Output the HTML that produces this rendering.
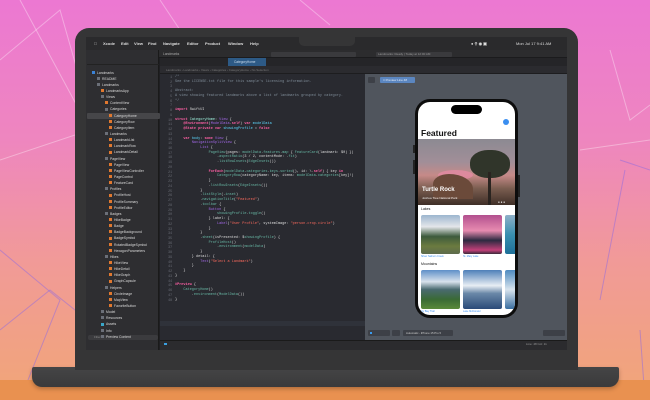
<!DOCTYPE html>
<html><head><meta charset="utf-8"><style>
*{margin:0;padding:0;box-sizing:border-box}
body{width:650px;height:400px;overflow:hidden;position:relative;font-family:"Liberation Sans",sans-serif;background:linear-gradient(180deg,#ec78d2 0%,#ee86bf 35%,#f19a98 65%,#f1a47c 95%)}
.abs{position:absolute}
.floor{left:0;top:380px;width:650px;height:20px;background:#e99150}
.bezel{left:75px;top:28px;width:503px;height:342px;background:#353536;border-radius:14px 14px 0 0}
.base{left:32px;top:367px;width:587px;height:20px;background:linear-gradient(#454546,#3a3a3b);border-radius:2px 2px 10px 10px;box-shadow:0 2px 4px rgba(0,0,0,.25)}
.screen{left:86px;top:37px;width:481px;height:313px;background:#1f1f22;overflow:hidden}
.notch{left:299px;top:36px;width:56px;height:10px;background:#353536;border-radius:0 0 5px 5px}
.menubar{left:0;top:0;width:481px;height:13px;background:#2a2a2c;color:#ddd;font-size:4px;font-weight:bold}
.menubar span{position:absolute;top:4px}
.tb{left:0;top:13px;width:481px;height:8px;background:#2c2c2e;border-bottom:1px solid #1b1b1d}
.side{left:0;top:13px;width:73px;height:300px;background:#2e2e31;border-right:1px solid #1a1a1a}
.row{position:absolute;font-size:3.4px;color:#d8d8d8;white-space:nowrap;height:5px;line-height:5px}
.ic{display:inline-block;width:3px;height:3px;margin-right:2px;vertical-align:-0.3px;background:#e0782f}
.fo{background:#6b6f78}
.editor{left:74px;top:21px;width:205px;height:292px;background:#292a30}
.tabs{left:74px;top:21px;width:407px;height:8px;background:#252528}
.crumb{left:74px;top:29px;width:407px;height:8px;background:#2b2b2f;border-bottom:1px solid #1d1d1f}
.code{position:absolute;left:74px;top:38px;font-family:"Liberation Mono",monospace;font-size:3.5px;line-height:4.74px;color:#dcdcdc;white-space:pre}
.ln{position:absolute;left:74px;top:38px;width:12px;text-align:right;font-family:"Liberation Mono",monospace;font-size:3.2px;line-height:4.74px;color:#6c6f78;white-space:pre}
.c{color:#7f8c98}.k{color:#fc5fa3;font-weight:bold}.t{color:#5dd8ff}.f{color:#67b7a4}.s{color:#fc6a5d}.p{color:#a167e6}.m{color:#9ef1dd}
.prev{left:279px;top:37px;width:202px;height:276px;background:#50555d}
.status{left:74px;top:303px;width:407px;height:10px;background:#2b2b2e;border-top:1px solid #1a1a1a}
.phone{left:415px;top:99px;width:103px;height:219px;background:#0d0d0d;border-radius:15px}
.ps{left:418px;top:102px;width:97px;height:213px;background:#fff;border-radius:12px;overflow:hidden}
</style></head><body>
<svg class="abs" style="left:0;top:0" width="650" height="400">
<g stroke="rgba(255,255,255,.35)" stroke-width="1" fill="none">
<polyline points="0,60 60,10 80,80"/><polyline points="20,0 90,130 0,160"/><polyline points="160,0 180,30"/><polyline points="300,0 330,25"/>
<polyline points="610,50 630,120 650,105"/><polyline points="580,150 650,140"/>
</g>
<g stroke="rgba(150,110,220,.55)" stroke-width="1" fill="none">
<polyline points="620,160 650,170"/><polyline points="600,300 625,170"/><polyline points="0,250 60,300 20,400"/><polyline points="0,330 50,290 100,330"/><polyline points="640,330 645,400"/>
</g>
</svg>
<div class="abs floor"></div>
<div class="abs base"></div>
<div class="abs bezel"></div>
<div class="abs screen">
 <div class="abs menubar">
  <span style="left:8px">&#63743;</span><span style="left:17px">Xcode</span><span style="left:35px">Edit</span><span style="left:48px">View</span><span style="left:62px">Find</span><span style="left:77px">Navigate</span><span style="left:101px">Editor</span><span style="left:119px">Product</span><span style="left:142px">Window</span><span style="left:164px">Help</span>
  <span style="left:385px">&#9679; &#9906; &#9673; &#9635;</span><span style="left:430px;font-weight:normal">Mon Jul 17 9:41 AM</span>
 </div>
 <div class="abs tb"></div>
 <div class="abs" style="left:6px;top:16px;width:12px;height:2px;border-top:2px dotted #777"></div>
 <div class="abs" style="left:77px;top:15px;font-size:3.3px;color:#aaa">Landmarks</div>
 <div class="abs" style="left:185px;top:15px;width:85px;height:5px;background:#3a3a3d;border-radius:1px"></div>
 <div class="abs" style="left:290px;top:15px;width:76px;height:5px;background:#3a3a3d;border-radius:1px;font-size:3px;color:#999;line-height:5px;padding-left:2px">Landmarks: Ready | Today at 12:00 AM</div>
 <div class="abs side"></div>
 <div class="abs" style="left:1px;top:27px;width:72px;height:1px;background:#222"></div>
 <div class="abs" style="left:2px;top:298px;width:70px;height:5px;background:#3b3b3e;border-radius:2px;font-size:3px;color:#888;padding-left:6px;line-height:5px">Filter</div>
 <div class="abs tabs"></div>
 <div class="abs" style="left:142px;top:21px;width:38px;height:8px;background:#2d5a86;font-size:3.2px;color:#cde;line-height:8px;padding-left:6px">CategoryHome</div>
 <div class="abs crumb"></div>
 <div class="abs" style="left:80px;top:31px;font-size:3px;color:#777">Landmarks › Landmarks › Views › Categories › CategoryHome › No Selection</div>
 <div class="abs editor" style="top:37px;height:266px"></div>
 <div class="abs" style="left:74px;top:284px;width:205px;height:5px;background:#2f323a"></div>
 <div class="abs prev"></div>
 <div class="abs" style="left:282px;top:40px;width:7px;height:6px;background:#3d4047;border-radius:1px"></div>
 <div class="abs" style="left:294px;top:40px;width:35px;height:6px;background:#5b86c0;border-radius:1px;font-size:3px;color:#e8eef8;line-height:6px;padding-left:3px">&#9633; Preview Line 48</div>
 <div class="abs" style="left:282px;top:293px;width:22px;height:6px;background:#3d4047;border-radius:1px"></div>
 <div class="abs" style="left:284px;top:295px;width:2px;height:2px;background:#3a9cf0"></div>
 <div class="abs" style="left:306px;top:293px;width:8px;height:6px;background:#3d4047;border-radius:1px"></div>
 <div class="abs" style="left:317px;top:293px;width:50px;height:6px;background:#3d4047;border-radius:1px;font-size:2.8px;color:#ccc;line-height:6px;padding-left:3px">Automatic - iPhone 15 Pro ▾</div>
 <div class="abs" style="left:457px;top:293px;width:22px;height:6px;background:#3d4047;border-radius:1px"></div>
 <div class="abs status"></div>
 <div class="abs" style="left:78px;top:306px;width:3px;height:2px;background:#3aa0e0"></div>
 <div class="abs" style="left:440px;top:305px;font-size:3px;color:#999">Line: 48  Col: 11</div>
</div>
<div class="abs notch"></div>

<!-- sidebar rows -->
<div id="sb"></div>
<div class="abs" style="left:87px;top:113px;width:73px;height:6px;background:#464649;border-radius:1px"></div>
<div class="row" style="left:92px;top:70.5px"><i class="ic" style="background:#3b82d6"></i>Landmarks</div>
<div class="row" style="left:97px;top:76.6px"><i class="ic fo"></i>README</div>
<div class="row" style="left:97px;top:82.8px"><i class="ic fo"></i>Landmarks</div>
<div class="row" style="left:101px;top:88.9px"><i class="ic"></i>LandmarksApp</div>
<div class="row" style="left:101px;top:95px"><i class="ic fo"></i>Views</div>
<div class="row" style="left:105px;top:101.2px"><i class="ic"></i>ContentView</div>
<div class="row" style="left:105px;top:107.3px"><i class="ic fo"></i>Categories</div>
<div class="row" style="left:109px;top:113.5px"><i class="ic"></i>CategoryHome</div>
<div class="row" style="left:109px;top:119.6px"><i class="ic"></i>CategoryRow</div>
<div class="row" style="left:109px;top:125.8px"><i class="ic"></i>CategoryItem</div>
<div class="row" style="left:105px;top:131.9px"><i class="ic fo"></i>Landmarks</div>
<div class="row" style="left:109px;top:138px"><i class="ic"></i>LandmarkList</div>
<div class="row" style="left:109px;top:144.2px"><i class="ic"></i>LandmarkRow</div>
<div class="row" style="left:109px;top:150.3px"><i class="ic"></i>LandmarkDetail</div>
<div class="row" style="left:105px;top:156.5px"><i class="ic fo"></i>PageView</div>
<div class="row" style="left:109px;top:162.6px"><i class="ic"></i>PageView</div>
<div class="row" style="left:109px;top:168.8px"><i class="ic"></i>PageViewController</div>
<div class="row" style="left:109px;top:174.9px"><i class="ic"></i>PageControl</div>
<div class="row" style="left:109px;top:181px"><i class="ic"></i>FeatureCard</div>
<div class="row" style="left:105px;top:187.2px"><i class="ic fo"></i>Profiles</div>
<div class="row" style="left:109px;top:193.3px"><i class="ic"></i>ProfileHost</div>
<div class="row" style="left:109px;top:199.5px"><i class="ic"></i>ProfileSummary</div>
<div class="row" style="left:109px;top:205.6px"><i class="ic"></i>ProfileEditor</div>
<div class="row" style="left:105px;top:211.8px"><i class="ic fo"></i>Badges</div>
<div class="row" style="left:109px;top:217.9px"><i class="ic"></i>HikeBadge</div>
<div class="row" style="left:109px;top:224px"><i class="ic"></i>Badge</div>
<div class="row" style="left:109px;top:230.2px"><i class="ic"></i>BadgeBackground</div>
<div class="row" style="left:109px;top:236.3px"><i class="ic"></i>BadgeSymbol</div>
<div class="row" style="left:109px;top:242.5px"><i class="ic"></i>RotatedBadgeSymbol</div>
<div class="row" style="left:109px;top:248.6px"><i class="ic"></i>HexagonParameters</div>
<div class="row" style="left:105px;top:254.8px"><i class="ic fo"></i>Hikes</div>
<div class="row" style="left:109px;top:260.9px"><i class="ic"></i>HikeView</div>
<div class="row" style="left:109px;top:267px"><i class="ic"></i>HikeDetail</div>
<div class="row" style="left:109px;top:273.2px"><i class="ic"></i>HikeGraph</div>
<div class="row" style="left:109px;top:279.3px"><i class="ic"></i>GraphCapsule</div>
<div class="row" style="left:105px;top:285.5px"><i class="ic fo"></i>Helpers</div>
<div class="row" style="left:109px;top:291.6px"><i class="ic"></i>CircleImage</div>
<div class="row" style="left:109px;top:297.8px"><i class="ic"></i>MapView</div>
<div class="row" style="left:109px;top:303.9px"><i class="ic"></i>FavoriteButton</div>
<div class="row" style="left:101px;top:310px"><i class="ic fo"></i>Model</div>
<div class="row" style="left:101px;top:316.2px"><i class="ic fo"></i>Resources</div>
<div class="row" style="left:101px;top:322.3px"><i class="ic" style="background:#3aa7c9"></i>Assets</div>
<div class="row" style="left:101px;top:328.5px"><i class="ic fo"></i>Info</div>
<div class="row" style="left:101px;top:334.6px"><i class="ic fo"></i>Preview Content</div>

<div class="ln" style="left:160px;top:75px">1
2
3
4
5
6
7
8
9
10
11
12
13
14
15
16
17
18
19
20
21
22
23
24
25
26
27
28
29
30
31
32
33
34
35
36
37
38
39
40
41
42
43
44
45
46
47
48</div>
<div class="code" style="left:175px;top:75px"><span class="c">/*
See the LICENSE.txt file for this sample's licensing information.

Abstract:
A view showing featured landmarks above a list of landmarks grouped by category.
*/</span>

<span class="k">import</span> SwiftUI

<span class="k">struct</span> <span class="m">CategoryHome</span>: <span class="p">View</span> {
    <span class="k">@Environment</span>(<span class="p">ModelData</span>.<span class="k">self</span>) <span class="k">var</span> <span class="t">modelData</span>
    <span class="k">@State private var</span> <span class="t">showingProfile</span> = <span class="k">false</span>

    <span class="k">var</span> <span class="t">body</span>: <span class="k">some</span> <span class="p">View</span> {
        <span class="p">NavigationSplitView</span> {
            <span class="p">List</span> {
                <span class="f">PageView</span>(pages: <span class="f">modelData</span>.<span class="f">features</span>.<span class="f">map</span> { <span class="f">FeatureCard</span>(landmark: $0) })
                    .<span class="f">aspectRatio</span>(3 / 2, contentMode: .<span class="f">fit</span>)
                    .<span class="f">listRowInsets</span>(<span class="f">EdgeInsets</span>())

                <span class="k">ForEach</span>(<span class="f">modelData</span>.<span class="f">categories</span>.<span class="f">keys</span>.<span class="f">sorted</span>(), id: \.<span class="k">self</span>) { key <span class="k">in</span>
                    <span class="f">CategoryRow</span>(categoryName: key, items: <span class="f">modelData</span>.<span class="f">categories</span>[key]!)
                }
                .<span class="f">listRowInsets</span>(<span class="f">EdgeInsets</span>())
            }
            .<span class="f">listStyle</span>(.<span class="f">inset</span>)
            .<span class="f">navigationTitle</span>(<span class="s">"Featured"</span>)
            .<span class="f">toolbar</span> {
                <span class="p">Button</span> {
                    <span class="f">showingProfile</span>.<span class="f">toggle</span>()
                } label: {
                    <span class="p">Label</span>(<span class="s">"User Profile"</span>, systemImage: <span class="s">"person.crop.circle"</span>)
                }
            }
            .<span class="f">sheet</span>(isPresented: $<span class="f">showingProfile</span>) {
                <span class="f">ProfileHost</span>()
                    .<span class="f">environment</span>(<span class="f">modelData</span>)
            }
        } detail: {
            <span class="p">Text</span>(<span class="s">"Select a Landmark"</span>)
        }
    }
}

<span class="k">#Preview</span> {
    <span class="f">CategoryHome</span>()
        .<span class="f">environment</span>(<span class="f">ModelData</span>())
}</div>

<!-- phone -->
<div class="abs phone"></div>
<div class="abs" style="left:413px;top:145px;width:2px;height:8px;background:#222"></div>
<div class="abs" style="left:413px;top:160px;width:2px;height:14px;background:#222"></div>
<div class="abs" style="left:518px;top:175px;width:2px;height:22px;background:#222"></div>
<div class="abs ps">
 <div class="abs" style="left:33px;top:3px;width:31px;height:9px;background:#000;border-radius:5px"></div>
 <div class="abs" style="left:85px;top:17px;width:6px;height:6px;background:#3a8ef0;border-radius:50%"></div>
 <div class="abs" style="left:3px;top:26px;font-size:8.5px;font-weight:bold;color:#111">Featured</div>
 <div class="abs" style="left:0;top:37px;width:97px;height:66px;background:linear-gradient(180deg,#8c8a92 0%,#a18e98 35%,#c68a88 55%,#7a5d50 75%,#3f2f27 100%)"></div>
 <div class="abs" style="left:20px;top:68px;width:35px;height:10px;background:#e38aa3;border-radius:50%;opacity:.8"></div>
 <div class="abs" style="left:15px;top:72px;width:40px;height:25px;background:#6b4a3a;border-radius:40% 60% 0 0"></div>
 <div class="abs" style="left:52px;top:48px;width:40px;height:28px;background:#30352a;border-radius:45%"></div>
 <div class="abs" style="left:70px;top:70px;width:3px;height:33px;background:#2a2420"></div>
 <div class="abs" style="left:4px;top:85px;font-size:6px;font-weight:bold;color:#fff">Turtle Rock</div>
 <div class="abs" style="left:4px;top:94px;font-size:3px;color:#eee">Joshua Tree National Park</div>
 <div class="abs" style="left:80px;top:98px;font-size:3px;color:#fff">● ● ●</div>
 <div class="abs" style="left:3px;top:105px;font-size:3.5px;color:#111">Lakes</div>
 <div class="abs" style="left:3px;top:113px;width:39px;height:39px;border-radius:2px;background:linear-gradient(180deg,#9cb6cf 0%,#e4e6ea 30%,#3d5a3c 55%,#6b7b3f 80%,#5e6b4d 100%)"></div>
 <div class="abs" style="left:45px;top:113px;width:39px;height:39px;border-radius:2px;background:linear-gradient(180deg,#b24f8e 0%,#e78bb0 40%,#2c2a40 65%,#c2407a 90%,#3a2a3a 100%)"></div>
 <div class="abs" style="left:87px;top:113px;width:12px;height:39px;border-radius:2px;background:linear-gradient(180deg,#8fb0c8,#3a90b0,#1e6f98)"></div>
 <div class="abs" style="left:3px;top:153px;font-size:2.5px;color:#3a8ef0">Silver Salmon Creek</div>
 <div class="abs" style="left:45px;top:153px;font-size:2.5px;color:#3a8ef0">St. Mary Lake</div>
 <div class="abs" style="left:3px;top:160px;font-size:3.5px;color:#111">Mountains</div>
 <div class="abs" style="left:3px;top:168px;width:39px;height:39px;border-radius:2px;background:linear-gradient(180deg,#5e8fc8 0%,#d8e2ec 30%,#4a6a70 50%,#3a6a35 75%,#5a8a3a 100%)"></div>
 <div class="abs" style="left:45px;top:168px;width:39px;height:39px;border-radius:2px;background:linear-gradient(180deg,#4e7fb8 0%,#e8eef4 40%,#6a88a8 60%,#2a4a78 100%)"></div>
 <div class="abs" style="left:87px;top:168px;width:12px;height:39px;border-radius:2px;background:linear-gradient(180deg,#4d8ac0,#d8e4ee,#3a6ea0)"></div>
 <div class="abs" style="left:3px;top:208px;font-size:2.5px;color:#3a8ef0">Icy Bay Trail</div>
 <div class="abs" style="left:45px;top:208px;font-size:2.5px;color:#3a8ef0">Lake McDonald</div>
</div>
</body></html>
